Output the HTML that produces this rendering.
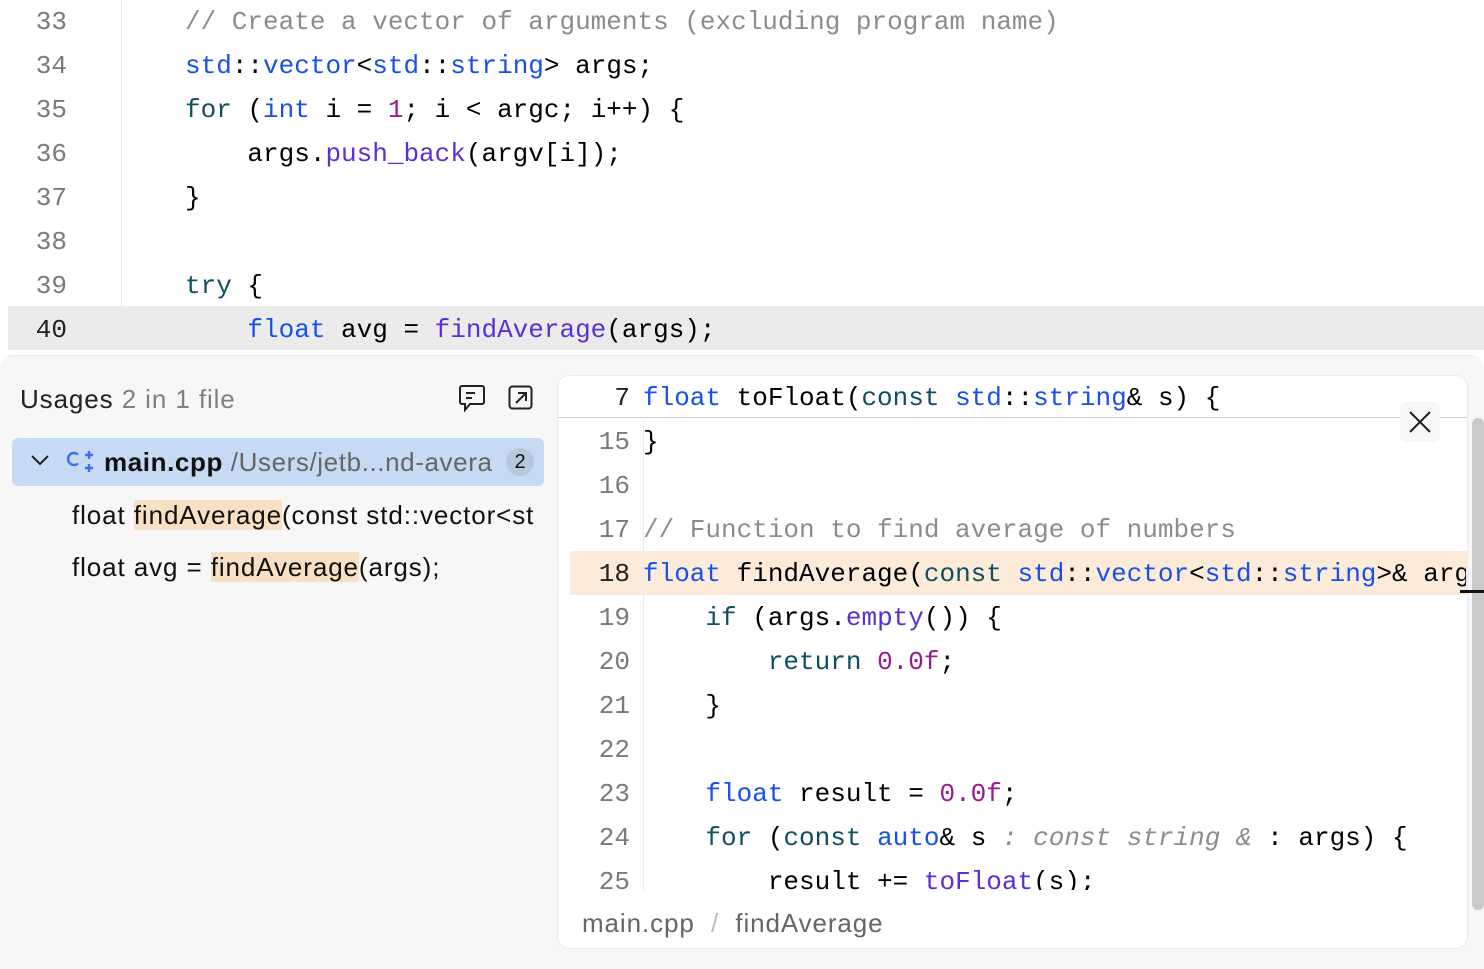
<!DOCTYPE html>
<html><head><style>
body{margin:0;width:1484px;height:968px;overflow:hidden;background:#fff;font-family:"Liberation Mono",monospace;position:relative}
.m{font-family:"Liberation Mono",monospace;font-size:26px;white-space:pre;position:absolute;line-height:44px}
.s{font-family:"Liberation Sans",sans-serif;font-size:26px;white-space:pre;position:absolute;letter-spacing:0.9px}
.k{color:#0033b3}.t{color:#1750eb}.f{color:#5c2ed6}.n{color:#9a1b8a}.c{color:#8c8c8c}.g{color:#00627a}.it{color:#8c8c8c;font-style:italic}.kw{color:#0f4f60}
.ln{position:absolute;width:67px;text-align:right;color:#7a7a7a;font-family:"Liberation Mono",monospace;font-size:26px;line-height:44px}
.ln2{position:absolute;left:570px;width:60px;text-align:right;color:#7a7a7a;font-family:"Liberation Mono",monospace;font-size:26px;line-height:44px}
</style></head><body>
<div style="position:absolute;left:8px;top:306px;width:1476px;height:44px;background:#ebebeb"></div>
<div style="position:absolute;left:121px;top:0;width:1px;height:350px;background:#ebebeb"></div>
<div class="ln" style="top:0px">33</div><div class="ln" style="top:44px">34</div><div class="ln" style="top:88px">35</div><div class="ln" style="top:132px">36</div><div class="ln" style="top:176px">37</div><div class="ln" style="top:220px">38</div><div class="ln" style="top:264px">39</div><div class="ln" style="top:308px;color:#222">40</div>
<div class="m c" style="left:185px;top:0px">// Create a vector of arguments (excluding program name)</div>
<div class="m" style="left:185px;top:44px"><span class="t">std</span>::<span class="t">vector</span>&lt;<span class="t">std</span>::<span class="t">string</span>&gt; args;</div>
<div class="m" style="left:185px;top:88px"><span class="kw">for</span> (<span class="t">int</span> i = <span class="n">1</span>; i &lt; argc; i++) {</div>
<div class="m" style="left:185px;top:132px">    args.<span class="f">push_back</span>(argv[i]);</div>
<div class="m" style="left:185px;top:176px">}</div>
<div class="m" style="left:185px;top:264px"><span class="kw">try</span> {</div>
<div class="m" style="left:185px;top:308px">    <span class="t">float</span> avg = <span class="f">findAverage</span>(args);</div>

<div style="position:absolute;left:0;top:355px;width:1484px;height:613px;background:#f7f7f7;border-radius:14px 14px 0 0;border-top:1px solid #ebebeb"></div>
<div class="s" style="left:20px;top:384px;color:#222">Usages <span style="color:#808080">2 in 1 file</span></div>
<svg style="position:absolute;left:458px;top:384px" width="28" height="30" viewBox="0 0 28 30" fill="none" stroke="#222" stroke-width="2"><path d="M4 2h20a2 2 0 0 1 2 2v14a2 2 0 0 1-2 2H12l-5 6v-6H4a2 2 0 0 1-2-2V4a2 2 0 0 1 2-2zM8 9h9M8 14h6"/></svg>
<svg style="position:absolute;left:508px;top:385px" width="26" height="26" viewBox="0 0 26 26" fill="none" stroke="#222" stroke-width="2"><rect x="1.5" y="1.5" width="22" height="22" rx="3"/><path d="M8 18L17 9M10 8h8v8"/></svg>
<div style="position:absolute;left:12px;top:438px;width:532px;height:48px;background:#c7daf3;border-radius:6px"></div>
<svg style="position:absolute;left:30px;top:453px" width="20" height="14" viewBox="0 0 20 14" fill="none" stroke="#222" stroke-width="2"><path d="M2 3l8 8 8-8"/></svg>
<svg style="position:absolute;left:66px;top:449px" width="30" height="26" viewBox="0 0 30 26" fill="none" stroke="#3574f0" stroke-width="2.4"><path d="M12 5.5a6 6 0 1 0 0 9" /><path d="M19 6h8M23 2v8M19 19h8M23 15v8"/></svg>
<div class="s" style="left:104px;top:447px;color:#111;overflow:hidden;width:400px;letter-spacing:0.6px"><b style="font-weight:600">main.cpp</b> <span style="color:#666">/Users/jetb...nd-avera</span></div>
<div style="position:absolute;left:506px;top:448px;width:28px;height:28px;border-radius:14px;background:#b8c8dc;font-family:'Liberation Sans',sans-serif;font-size:20px;text-align:center;line-height:28px;color:#111">2</div>
<div class="s" style="left:72px;top:500px;color:#111;width:472px;overflow:hidden">float <span style="background:#f7e0c4">findAverage</span>(const std::vector&lt;st</div>
<div class="s" style="left:72px;top:552px;color:#111">float avg = <span style="background:#f7e0c4">findAverage</span>(args);</div>

<div style="position:absolute;left:557px;top:375px;width:909px;height:572px;background:#fff;border:1px solid #e4ebf7;border-radius:12px;overflow:hidden">
<div style="position:absolute;left:0;top:41px;width:909px;height:1px;background:#d0d0d0"></div>
<div style="position:absolute;left:12px;top:175px;width:897px;height:44px;background:#fcebd9"></div>
<div style="position:absolute;left:85px;top:44px;width:1px;height:470px;background:#ececec"></div>
</div>
<div style="position:absolute;left:1400px;top:402px;width:40px;height:40px;background:#f7f7f7;border-radius:6px"></div>
<svg style="position:absolute;left:1408px;top:410px" width="24" height="24" viewBox="0 0 24 24" stroke="#222" stroke-width="2"><path d="M2 2l20 20M22 2L2 22"/></svg>
<div style="position:absolute;left:1472px;top:418px;width:12px;height:492px;background:#c9c9c9;border-radius:6px"></div>
<div style="position:absolute;left:1460px;top:590px;width:24px;height:3px;background:#111"></div>
<div style="position:absolute;left:558px;top:420px;width:908px;height:470px;overflow:hidden">
<div class="ln2" style="left:12px;top:0px">15</div><div class="m" style="left:85px;top:0px">}</div>
<div class="ln2" style="left:12px;top:44px">16</div>
<div class="ln2" style="left:12px;top:88px">17</div><div class="m c" style="left:85px;top:88px">// Function to find average of numbers</div>
<div class="ln2" style="left:12px;top:132px;color:#222">18</div><div class="m" style="left:85px;top:132px"><span class="t">float</span> findAverage(<span class="kw">const</span> <span class="t">std</span>::<span class="t">vector</span>&lt;<span class="t">std</span>::<span class="t">string</span>&gt;&amp; arg</div>
<div class="ln2" style="left:12px;top:176px">19</div><div class="m" style="left:85px;top:176px">    <span class="kw">if</span> (args.<span class="f">empty</span>()) {</div>
<div class="ln2" style="left:12px;top:220px">20</div><div class="m" style="left:85px;top:220px">        <span class="kw">return</span> <span class="n">0.0f</span>;</div>
<div class="ln2" style="left:12px;top:264px">21</div><div class="m" style="left:85px;top:264px">    }</div>
<div class="ln2" style="left:12px;top:308px">22</div>
<div class="ln2" style="left:12px;top:352px">23</div><div class="m" style="left:85px;top:352px">    <span class="t">float</span> result = <span class="n">0.0f</span>;</div>
<div class="ln2" style="left:12px;top:396px">24</div><div class="m" style="left:85px;top:396px">    <span class="kw">for</span> (<span class="kw">const</span> <span class="t">auto</span>&amp; s<span class="it"> : const string &amp;</span> : args) {</div>
<div class="ln2" style="left:12px;top:440px">25</div><div class="m" style="left:85px;top:440px">        result += <span class="f">toFloat</span>(s);</div>
</div>
<div class="ln2" style="left:570px;top:376px;color:#222">7</div><div class="m" style="left:643px;top:376px"><span class="t">float</span> toFloat(<span class="kw">const</span> <span class="t">std</span>::<span class="t">string</span>&amp; s) {</div>
<div class="s" style="left:582px;top:908px;color:#666">main.cpp  <span style="color:#bbb">/</span>  findAverage</div>
</body></html>
